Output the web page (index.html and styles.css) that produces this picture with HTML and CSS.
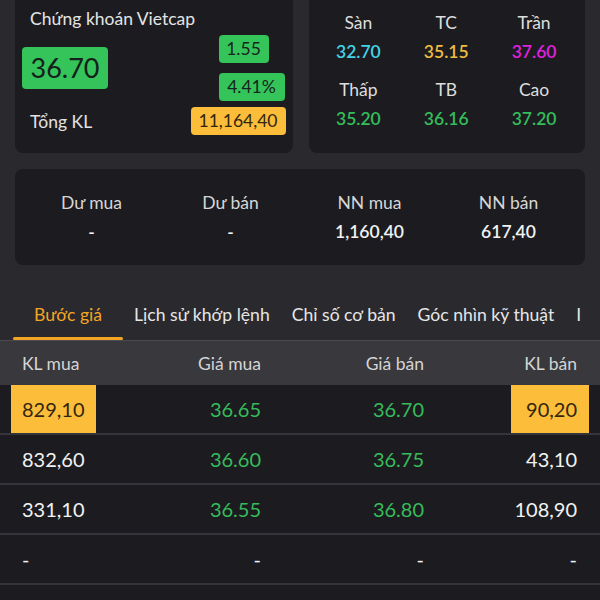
FILE: index.html
```html
<!DOCTYPE html>
<html lang="vi">
<head>
<meta charset="utf-8">
<link rel="stylesheet" href="styles.css">
</head>
<body>
<div class="page">
  <div class="top">
    <div class="card quote">
      <div class="q-title">Chứng khoán Vietcap</div>
      <div class="q-price">36.70</div>
      <div class="badge green b1">1.55</div>
      <div class="badge green b2">4.41%</div>
      <div class="q-label">Tổng KL</div>
      <div class="badge yellow b3">11,164,40</div>
    </div>
    <div class="card levels">
      <div class="lv"><div class="lv-l">Sàn</div><div class="lv-v cyan">32.70</div></div>
      <div class="lv"><div class="lv-l">TC</div><div class="lv-v gold">35.15</div></div>
      <div class="lv"><div class="lv-l">Trần</div><div class="lv-v magenta">37.60</div></div>
      <div class="lv"><div class="lv-l">Thấp</div><div class="lv-v green-t">35.20</div></div>
      <div class="lv"><div class="lv-l">TB</div><div class="lv-v green-t">36.16</div></div>
      <div class="lv"><div class="lv-l">Cao</div><div class="lv-v green-t">37.20</div></div>
    </div>
  </div>

  <div class="card stats">
    <div class="st"><div class="st-l">Dư mua</div><div class="st-v">-</div></div>
    <div class="st"><div class="st-l">Dư bán</div><div class="st-v">-</div></div>
    <div class="st"><div class="st-l">NN mua</div><div class="st-v">1,160,40</div></div>
    <div class="st"><div class="st-l">NN bán</div><div class="st-v">617,40</div></div>
  </div>

  <div class="tabs">
    <div class="tab active">Bước giá</div>
    <div class="tab">Lịch sử khớp lệnh</div>
    <div class="tab">Chỉ số cơ bản</div>
    <div class="tab">Góc nhìn kỹ thuật</div>
    <div class="tab">I</div>
  </div>

  <div class="book">
    <div class="row head">
      <div class="c1"><span class="cell">KL mua</span></div>
      <div class="c2">Giá mua</div>
      <div class="c3">Giá bán</div>
      <div class="c4"><span class="cell cell-r">KL bán</span></div>
    </div>
    <div class="row">
      <div class="c1"><span class="cell hl">829,10</span></div>
      <div class="c2 price">36.65</div>
      <div class="c3 price">36.70</div>
      <div class="c4"><span class="cell cell-r hl">90,20</span></div>
    </div>
    <div class="row">
      <div class="c1"><span class="cell">832,60</span></div>
      <div class="c2 price">36.60</div>
      <div class="c3 price">36.75</div>
      <div class="c4"><span class="cell cell-r">43,10</span></div>
    </div>
    <div class="row">
      <div class="c1"><span class="cell">331,10</span></div>
      <div class="c2 price">36.55</div>
      <div class="c3 price">36.80</div>
      <div class="c4"><span class="cell cell-r">108,90</span></div>
    </div>
    <div class="row">
      <div class="c1"><span class="cell">-</span></div>
      <div class="c2">-</div>
      <div class="c3">-</div>
      <div class="c4"><span class="cell cell-r">-</span></div>
    </div>
    <div class="row">
      <div class="c1"><span class="cell"></span></div>
      <div class="c2"></div>
      <div class="c3"></div>
      <div class="c4"><span class="cell cell-r"></span></div>
    </div>
  </div>
</div>
</body>
</html>
```

FILE: styles.css
```css
* { box-sizing: border-box; }
html, body {
  margin: 0;
  padding: 0;
  background: #29292e;
  font-family: Lato, "Liberation Sans", sans-serif;
  color: #e2e2e2;
  overflow: hidden;
}
.page {
  width: 600px;
  height: 600px;
  overflow: hidden;
}
.top {
  display: flex;
  gap: 16px;
  padding: 0 15px;
}
.card {
  background: #1c1c20;
  border-radius: 8px;
}
.top .card {
  flex: 1;
  height: 153px;
  border-radius: 0 0 8px 8px;
}

/* quote card */
.quote {
  display: grid;
  grid-template-columns: 1fr auto;
  grid-template-rows: 25px 28px 28px 28px;
  row-gap: 10px;
  padding: 0 7px 0 7px;
}
.quote .q-title {
  grid-column: 1 / 3;
  grid-row: 1;
  font-size: 17.5px;
  line-height: 22px;
  padding: 8px 0 0 8px;
  color: #e4e4e4;
  white-space: nowrap;
}
.quote .q-price {
  grid-column: 1;
  grid-row: 2 / 4;
  align-self: center;
  justify-self: start;
  width: 86px;
  height: 42px;
  background: #34c45a;
  color: #15201a;
  border-radius: 4px;
  font-size: 27px;
  line-height: 42px;
  text-align: center;
}
.quote .q-label {
  grid-column: 1;
  grid-row: 4;
  align-self: center;
  padding-left: 8px;
  font-size: 17.5px;
  line-height: 22px;
  margin-top: -6px;
}
.badge {
  height: 28px;
  line-height: 28px;
  border-radius: 4px;
  font-size: 17.5px;
  text-align: center;
}
.badge.green { background: #34c45a; color: #17261c; }
.badge.yellow { background: #fbbd3a; color: #33260e; }
.b1 { grid-column: 2; grid-row: 2; width: 50px; justify-self: end; margin-right: 17px; }
.b2 { grid-column: 2; grid-row: 3; width: 66px; justify-self: end; margin-right: 1px; }
.b3 { grid-column: 2; grid-row: 4; width: 95px; justify-self: end; margin-top: -4px; }

/* levels card */
.levels {
  display: grid;
  grid-template-columns: repeat(3, 1fr);
  row-gap: 14px;
  padding: 11px 7px 0 6px;
  align-content: start;
}
.lv { text-align: center; }
.lv-l {
  font-size: 17.5px;
  line-height: 24px;
  color: #dedede;
}
.lv-v {
  font-size: 17.5px;
  line-height: 24px;
  margin-top: 5px;
  font-weight: 600;
}
.cyan { color: #43d3e6; }
.gold { color: #efbd3f; }
.magenta { color: #e021e0; }
.green-t { color: #35bd5b; }

/* stats card */
.stats {
  margin: 16px 15px 0;
  height: 96px;
  display: grid;
  grid-template-columns: repeat(4, 1fr);
  padding: 22px 7px 0;
}
.st { text-align: center; }
.st-l {
  font-size: 17.5px;
  line-height: 24px;
  color: #d6d6d6;
}
.st-v {
  font-size: 17.5px;
  line-height: 24px;
  margin-top: 5px;
  font-weight: 600;
  color: #f2f2f2;
}

/* tabs */
.tabs {
  display: flex;
  gap: 22px;
  padding: 0 0 0 34px;
  margin-top: 25px;
  height: 50px;
  white-space: nowrap;
}
.tab {
  position: relative;
  font-size: 17.6px;
  line-height: 24px;
  padding-top: 13px;
  color: #e6e6e6;
}
.tab.active {
  color: #f5a524;
  margin-right: 10px;
}
.tab.active::after {
  content: "";
  position: absolute;
  left: -21px;
  right: -21px;
  bottom: 0;
  height: 3px;
  border-radius: 2px;
  background: #f5a524;
}

/* order book */
.book {
  background: #1c1c20;
}
.row {
  display: grid;
  grid-template-columns: 84px 166px 163px 1fr;
  padding: 0 11px;
  height: 50px;
  border-bottom: 2px solid #34343a;
  font-size: 20px;
  color: #f2f2f2;
}
.row.head {
  height: 45px;
  background: #38383d;
  border-top: 1px solid #4a4a50;
  border-bottom: none;
  font-size: 17.5px;
  color: #d4d4d4;
}
.row > div {
  display: flex;
  align-items: center;
}
.row .c2, .row .c3, .row .c4 { justify-content: flex-end; }
.cell {
  display: flex;
  align-items: center;
  height: 100%;
  padding: 0 11px;
  white-space: nowrap;
}
.cell-r { padding: 0 12px 0 15px; }
.hl {
  background: #fbbd3a;
  color: #33260e;
}
.price { color: #36bb5b; }
```
